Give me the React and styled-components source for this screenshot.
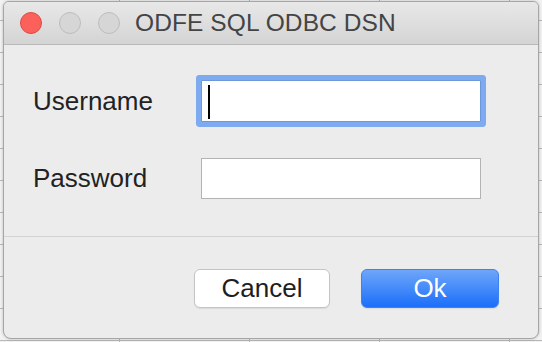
import React from 'react'
import styled, { createGlobalStyle } from 'styled-components'

const GlobalStyle = createGlobalStyle`
html, body {
  margin: 0;
  padding: 0;
}
body {
  width: 542px;
  height: 342px;
  overflow: hidden;
  font-family: "Liberation Sans", Arial, sans-serif;
  background-color: #f2f2f2;
  background-image:
    repeating-linear-gradient(to bottom, transparent 0, transparent 20px, #b8b8b8 20px, #b8b8b8 21px, transparent 21px, transparent 32px),
    repeating-linear-gradient(to right, transparent 0, transparent 119px, #b8b8b8 119px, #b8b8b8 120px, transparent 120px, transparent 130px);
}
`;

const Window = styled.div`
margin: 1px 3px 0 3px;
width: 536px;
height: 338px;
box-sizing: border-box;
border: 1px solid #a6a6a6;
border-radius: 6px 6px 8px 8px;
background: #ececec;
box-shadow: 0 0 3px rgba(0, 0, 0, 0.25);
overflow: hidden;
display: flex;
flex-direction: column;`;

const TitleBar = styled.div`
position: relative;
height: 42px;
flex-shrink: 0;
display: flex;
align-items: center;
padding-left: 16px;
background: linear-gradient(to bottom, #e8e8e8, #d4d4d4);
border-bottom: 1px solid #b9b9b9;`;

const Lights = styled.div`
display: flex;
gap: 17px;`;

const Light = styled.span`
width: 22px;
height: 22px;
border-radius: 50%;
box-sizing: border-box;
background: ${p => p.$red ? '#fc605b' : '#d6d6d6'};
border: 1px solid ${p => p.$red ? '#de4a44' : '#bdbdbd'};`;

const Title = styled.div`
margin-left: 15px;
font-size: 24.5px;
color: #444;
letter-spacing: 0.1px;`;

const Form = styled.div`
display: grid;
grid-template-columns: 168px 280px;
row-gap: 36px;
align-items: center;
padding: 35px 0 0 29px;`;

const Label = styled.label`
font-size: 26px;
color: #222;`;

const Field = styled.div`
position: relative;
height: ${p => p.$focused ? 42 : 41}px;`;

const Input = styled.input`
width: 280px;
height: 100%;
box-sizing: border-box;
margin: 0;
padding: 0 8px;
font-size: 20px;
font-family: inherit;
background: #fff;
border: 1px solid ${p => p.$focused ? '#6c97dc' : '#b3b3b3'};
border-radius: ${p => p.$focused ? '1px' : '0'};
box-shadow: ${p => p.$focused ? '0 0 0 5px #7eaaef' : 'none'};
outline: none;
caret-color: transparent;`;

const Caret = styled.span`
position: absolute;
left: 7px;
top: 5px;
width: 2px;
height: 34px;
background: #000;`;

const Separator = styled.hr`
margin: 37px 0 0 0;
border: none;
border-top: 1px solid #d3d3d3;`;

const Buttons = styled.div`
display: flex;
justify-content: flex-end;
gap: 31px;
padding: 32px 39px 0 0;`;

const Button = styled.button`
width: ${p => p.$primary ? 138 : 136}px;
height: 39px;
box-sizing: border-box;
border-radius: 6px;
font-family: inherit;
font-size: 26px;
padding: 0;
color: ${p => p.$primary ? '#fff' : '#1e1e1e'};
background: ${p => p.$primary ? 'linear-gradient(to bottom, #6ea6f9, #1b6ff9)' : '#fff'};
border: 1px solid ${p => p.$primary ? '#3d82f2' : '#c4c4c4'};
box-shadow: 0 1px 1px rgba(0, 0, 0, 0.08);`;

export default function App() {
    return (
        <>
            <GlobalStyle />
            <Window>
                <TitleBar>
                    <Lights>
                        <Light $red />
                        <Light />
                        <Light />
                    </Lights>
                    <Title>ODFE SQL ODBC DSN</Title>
                </TitleBar>
                <Form>
                    <Label>Username</Label>
                    <Field $focused>
                        <Input $focused type="text" />
                        <Caret />
                    </Field>
                    <Label>Password</Label>
                    <Field>
                        <Input type="password" />
                    </Field>
                </Form>
                <Separator />
                <Buttons>
                    <Button>Cancel</Button>
                    <Button $primary>Ok</Button>
                </Buttons>
            </Window>
        </>
    )
}
